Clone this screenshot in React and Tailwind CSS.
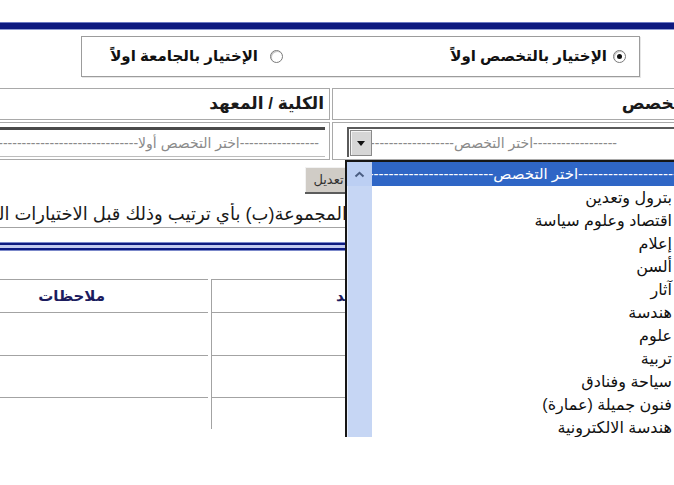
import React from "react";

const MAJORS = [
  "بترول وتعدين",
  "اقتصاد وعلوم سياسة",
  "إعلام",
  "ألسن",
  "آثار",
  "هندسة",
  "علوم",
  "تربية",
  "سياحة وفنادق",
  "فنون جميلة (عمارة)",
  "هندسة الالكترونية",
];

const dashes = (n) => "-".repeat(n);

function Radio({ checked }) {
  return (
    <span className="relative flex h-[13px] w-[13px] shrink-0 items-center justify-center rounded-full border border-[#7a7a7a] bg-white shadow-[inset_1px_1px_0_#c8c8c8]">
      {checked && <span className="h-[5px] w-[5px] rounded-full bg-[#111]" />}
    </span>
  );
}

function MajorList() {
  return (
    <div className="absolute left-[345px] top-[160px] flex h-[277px] w-[335px] overflow-hidden border-l-2 border-t-2 border-[#161616] bg-white">
      {/* vertical scrollbar */}
      <div className="flex w-[25px] shrink-0 flex-col bg-[#c6d6f4] shadow-[inset_1px_0_0_#e4ecfb]">
        <div className="flex h-[24px] items-center justify-center bg-[#bccff3]">
          <svg width="11" height="7" viewBox="0 0 11 7">
            <polyline points="1.5,5.5 5.5,1.8 9.5,5.5" fill="none" stroke="#4a5d82" strokeWidth="2" />
          </svg>
        </div>
        <div className="flex-1" />
      </div>
      <div dir="rtl" className="min-w-0 flex-1 overflow-hidden text-[16px] text-[#111]">
        <div className="h-[24px] overflow-hidden whitespace-nowrap bg-[#2f66c6] pr-[2px] text-[15px] leading-[24px] text-white">
          {dashes(20)}اختر التخصص{dashes(28)}
        </div>
        {MAJORS.map((m) => (
          <div key={m} className="h-[23px] whitespace-nowrap pr-[8px] leading-[23px]">
            {m}
          </div>
        ))}
      </div>
    </div>
  );
}

export default function App() {
  return (
    <div className="relative h-[485px] w-[674px] overflow-hidden bg-white font-['Liberation_Sans','DejaVu_Sans',sans-serif]">
      <div className="ml-[-30px] w-[732px] pt-[22px]">
        {/* top rule */}
        <div className="h-[8px] border-y border-t-[#6b79c2] border-b-[#8f9bd2] bg-[#0d1a80]" />

        {/* search mode */}
        <div
          dir="rtl"
          className="ml-[111px] mt-[6px] flex h-[41px] w-[559px] items-center border border-[#9c9c9c] pr-[13px] shadow-[inset_1px_1px_0_#fff,1px_1px_0_#e6e6e6] text-[15px] font-bold text-[#111]"
        >
          <label className="flex w-[343px] items-center gap-[6px]">
            <Radio checked />
            <span>الإختيار بالتخصص اولاً</span>
          </label>
          <label className="flex items-center gap-[12px]">
            <Radio />
            <span>الإختيار بالجامعة اولاً</span>
          </label>
        </div>

        {/* form table */}
        <div className="mt-[11px] flex flex-col gap-[2px]">
          <div className="flex gap-[2px]">
            <div dir="rtl" className="flex h-[32px] w-[360px] items-center border border-[#a9a9a9] pr-[5px] text-[17px] font-bold text-[#1a1a1a]">
              الكلية / المعهد
            </div>
            <div dir="rtl" className="flex h-[32px] w-[370px] items-center border border-[#a9a9a9] pr-[8px] text-[17px] font-bold text-[#1a1a1a]">
              التخصص
            </div>
          </div>
          <div className="flex gap-[2px]">
            <div className="h-[38px] w-[360px] border border-[#a9a9a9] pr-[4px] pt-[4px]">
              <div dir="rtl" className="flex h-[30px] items-center overflow-hidden whitespace-nowrap border-b border-t-[3px] border-b-[#bdbdbd] border-t-[#4a4a4a] pr-[6px] text-[14px] text-[#8a8a8a]">
                {dashes(17)}اختر التخصص أولا{dashes(30)}
              </div>
            </div>
            <div className="h-[38px] w-[370px] border border-[#a9a9a9] pl-[14px] pt-[4px]">
              <div className="flex h-[30px] items-center border-l-2 border-t-2 border-[#5a5a5a] bg-white pl-[1px]">
                <div className="flex h-[26px] w-[22px] items-center justify-center border border-[#8a8a8a] bg-[#d6d6d6] shadow-[inset_1px_1px_0_#f4f4f4]">
                  <svg width="8" height="5" viewBox="0 0 8 5">
                    <polygon points="0,0 8,0 4,5" fill="#111" />
                  </svg>
                </div>
                <div dir="rtl" className="min-w-0 flex-1 overflow-hidden whitespace-nowrap pr-[84px] text-[14px] text-[#8a8a8a]">
                  {dashes(18)}اختر التخصص{dashes(18)}
                </div>
              </div>
            </div>
          </div>
        </div>

        {/* edit button */}
        <div className="mt-[7px] flex">
          <button className="ml-[335px] h-[27px] w-[48px] border-b-2 border-r border-[#5c5c5c] bg-[#d0ccc6] text-[13px] text-[#333] shadow-[inset_1px_1px_0_#f2f2f2]">
            تعديل
          </button>
        </div>

        {/* instruction line */}
        <div dir="rtl" className="mt-[9px] w-[377px] overflow-hidden whitespace-nowrap text-[18px] leading-[22px] text-[#1a1a1a]">
          المجموعة(ب) بأي ترتيب وذلك قبل الاختيارات النهائية
        </div>

        <div className="mt-[2px] h-px bg-[#a3a3a3]" />

        {/* double rule */}
        <div className="mt-[14px] flex flex-col">
          <div className="h-px bg-[#7b88c9]" />
          <div className="h-[2px] bg-[#0d1a80]" />
          <div className="h-[3px] bg-[#c3cbef]" />
          <div className="h-[2px] bg-[#0d1a80]" />
          <div className="h-px bg-[#7b88c9]" />
        </div>

        {/* results table */}
        <div className="mt-[28px] flex flex-col text-[15px] font-bold text-[#1c1c5e]">
          <div className="flex h-[33px]">
            <div dir="rtl" className="flex w-[238px] items-center border-t border-[#a3a3a3] pr-[103px]">
              ملاحظات
            </div>
            <div className="ml-[3px] flex flex-1 items-center border-l border-t border-[#a3a3a3] pl-[124px]">
              <span dir="rtl">الترتيب المعتمد</span>
            </div>
          </div>
          {[43, 42, 32].map((h, i) => (
            <div key={i} className="flex" style={{ height: h }}>
              <div className="w-[238px] border-t border-[#a3a3a3]" />
              <div className="ml-[3px] flex-1 border-l border-t border-[#a3a3a3]" />
            </div>
          ))}
        </div>
      </div>

      <MajorList />
    </div>
  );
}
